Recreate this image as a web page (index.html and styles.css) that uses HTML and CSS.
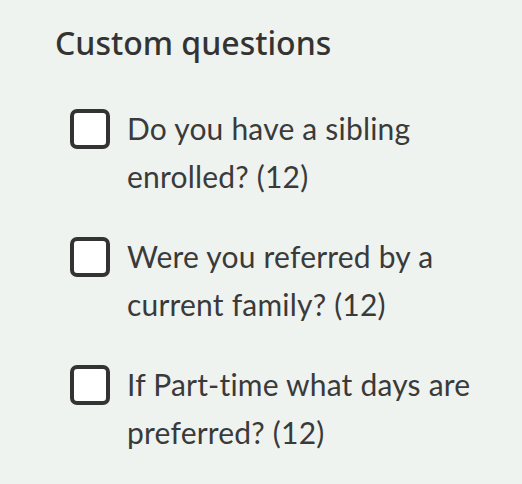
FILE: index.html
```html
<!DOCTYPE html>
<html>
<head>
<meta charset="utf-8">
<link rel="stylesheet" href="styles.css">
</head>
<body>
<section class="panel">
  <h2 class="title">Custom questions</h2>
  <ul class="list">
    <li class="item"><span class="box"></span><span class="label">Do you have a sibling enrolled? (12)</span></li>
    <li class="item"><span class="box"></span><span class="label">Were you referred by a current family? (12)</span></li>
    <li class="item"><span class="box"></span><span class="label">If Part-time what days are preferred? (12)</span></li>
  </ul>
</section>
</body>
</html>
```
FILE: styles.css
```css
html, body {
  margin: 0;
  background: #eef3f0;
}
body {
  font-family: "Lato", "Noto Sans", sans-serif;
  color: #333;
}
.panel {
  padding: 21px 20px 0 55px;
}
.title {
  margin: 0;
  font-family: "Noto Sans", "Lato", sans-serif;
  font-size: 32px;
  font-weight: 500;
  line-height: 44px;
  color: #333;
}
.list {
  list-style: none;
  margin: 39px 0 0;
  padding: 0 0 0 15px;
  display: flex;
  flex-direction: column;
  gap: 32px;
}
.item {
  display: flex;
  align-items: flex-start;
  gap: 17px;
}
.box {
  flex: none;
  width: 32px;
  height: 32px;
  margin-top: 5px;
  border: 4px solid #333;
  border-radius: 7px;
  background: #fff;
}
.label {
  font-size: 30px;
  line-height: 48px;
  max-width: 370px;
  letter-spacing: 0.2px;
  color: #3a3a3a;
}
```
